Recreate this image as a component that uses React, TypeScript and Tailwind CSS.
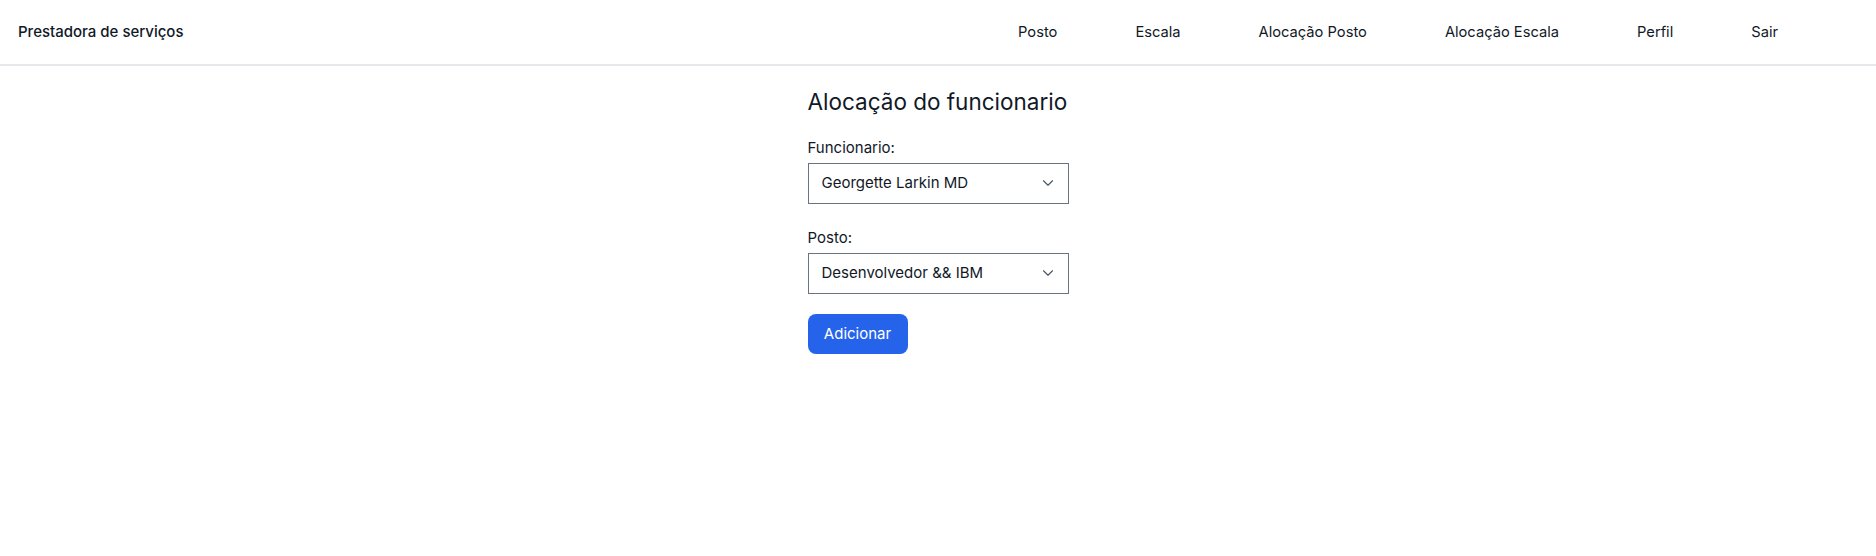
import React from 'react'
import { ChevronDown } from 'lucide-react'

const links = ['Posto', 'Escala', 'Alocação Posto', 'Alocação Escala', 'Perfil', 'Sair']

function Field({ label, value }: { label: string; value: string }) {
  return (
    <div className="flex flex-col">
      <label className="text-[15px] leading-5 text-[#111827]">{label}</label>
      <div className="relative mt-[5px]">
        <select
          defaultValue={value}
          className="w-full h-[41px] appearance-none border border-[#6b7280] bg-white pl-[13px] pr-10 text-[15px] text-[#111827] outline-none"
        >
          <option>{value}</option>
        </select>
        <ChevronDown
          size={18}
          strokeWidth={1.5}
          className="pointer-events-none absolute right-[12px] top-[11px] text-[#4b5563]"
        />
      </div>
    </div>
  )
}

export default function App() {
  return (
    <div className="min-h-screen bg-white text-[#111827]" style={{ fontFamily: 'Inter, "Noto Sans", sans-serif' }}>
      <header className="flex h-[66px] items-center justify-between border-b-2 border-[#e5e7eb] pl-[18px] pr-[98px]">
        <span className="text-[15px] font-medium">Prestadora de serviços</span>
        <nav className="flex gap-[78px]">
          {links.map((l) => (
            <a key={l} href="#" className="text-[14.7px] text-[#111827]">
              {l}
            </a>
          ))}
        </nav>
      </header>
      <main className="mx-auto mt-[20px] flex w-[261px] flex-col">
        <h1 className="whitespace-nowrap text-[22.5px] leading-8">Alocação do funcionario</h1>
        <div className="mt-[20px] flex flex-col gap-[24px]">
          <Field label="Funcionario:" value="Georgette Larkin MD" />
          <Field label="Posto:" value="Desenvolvedor && IBM" />
        </div>
        <button className="mt-[20px] h-10 w-[100px] rounded-lg bg-[#2563eb] text-[15px] text-white">
          Adicionar
        </button>
      </main>
    </div>
  )
}
